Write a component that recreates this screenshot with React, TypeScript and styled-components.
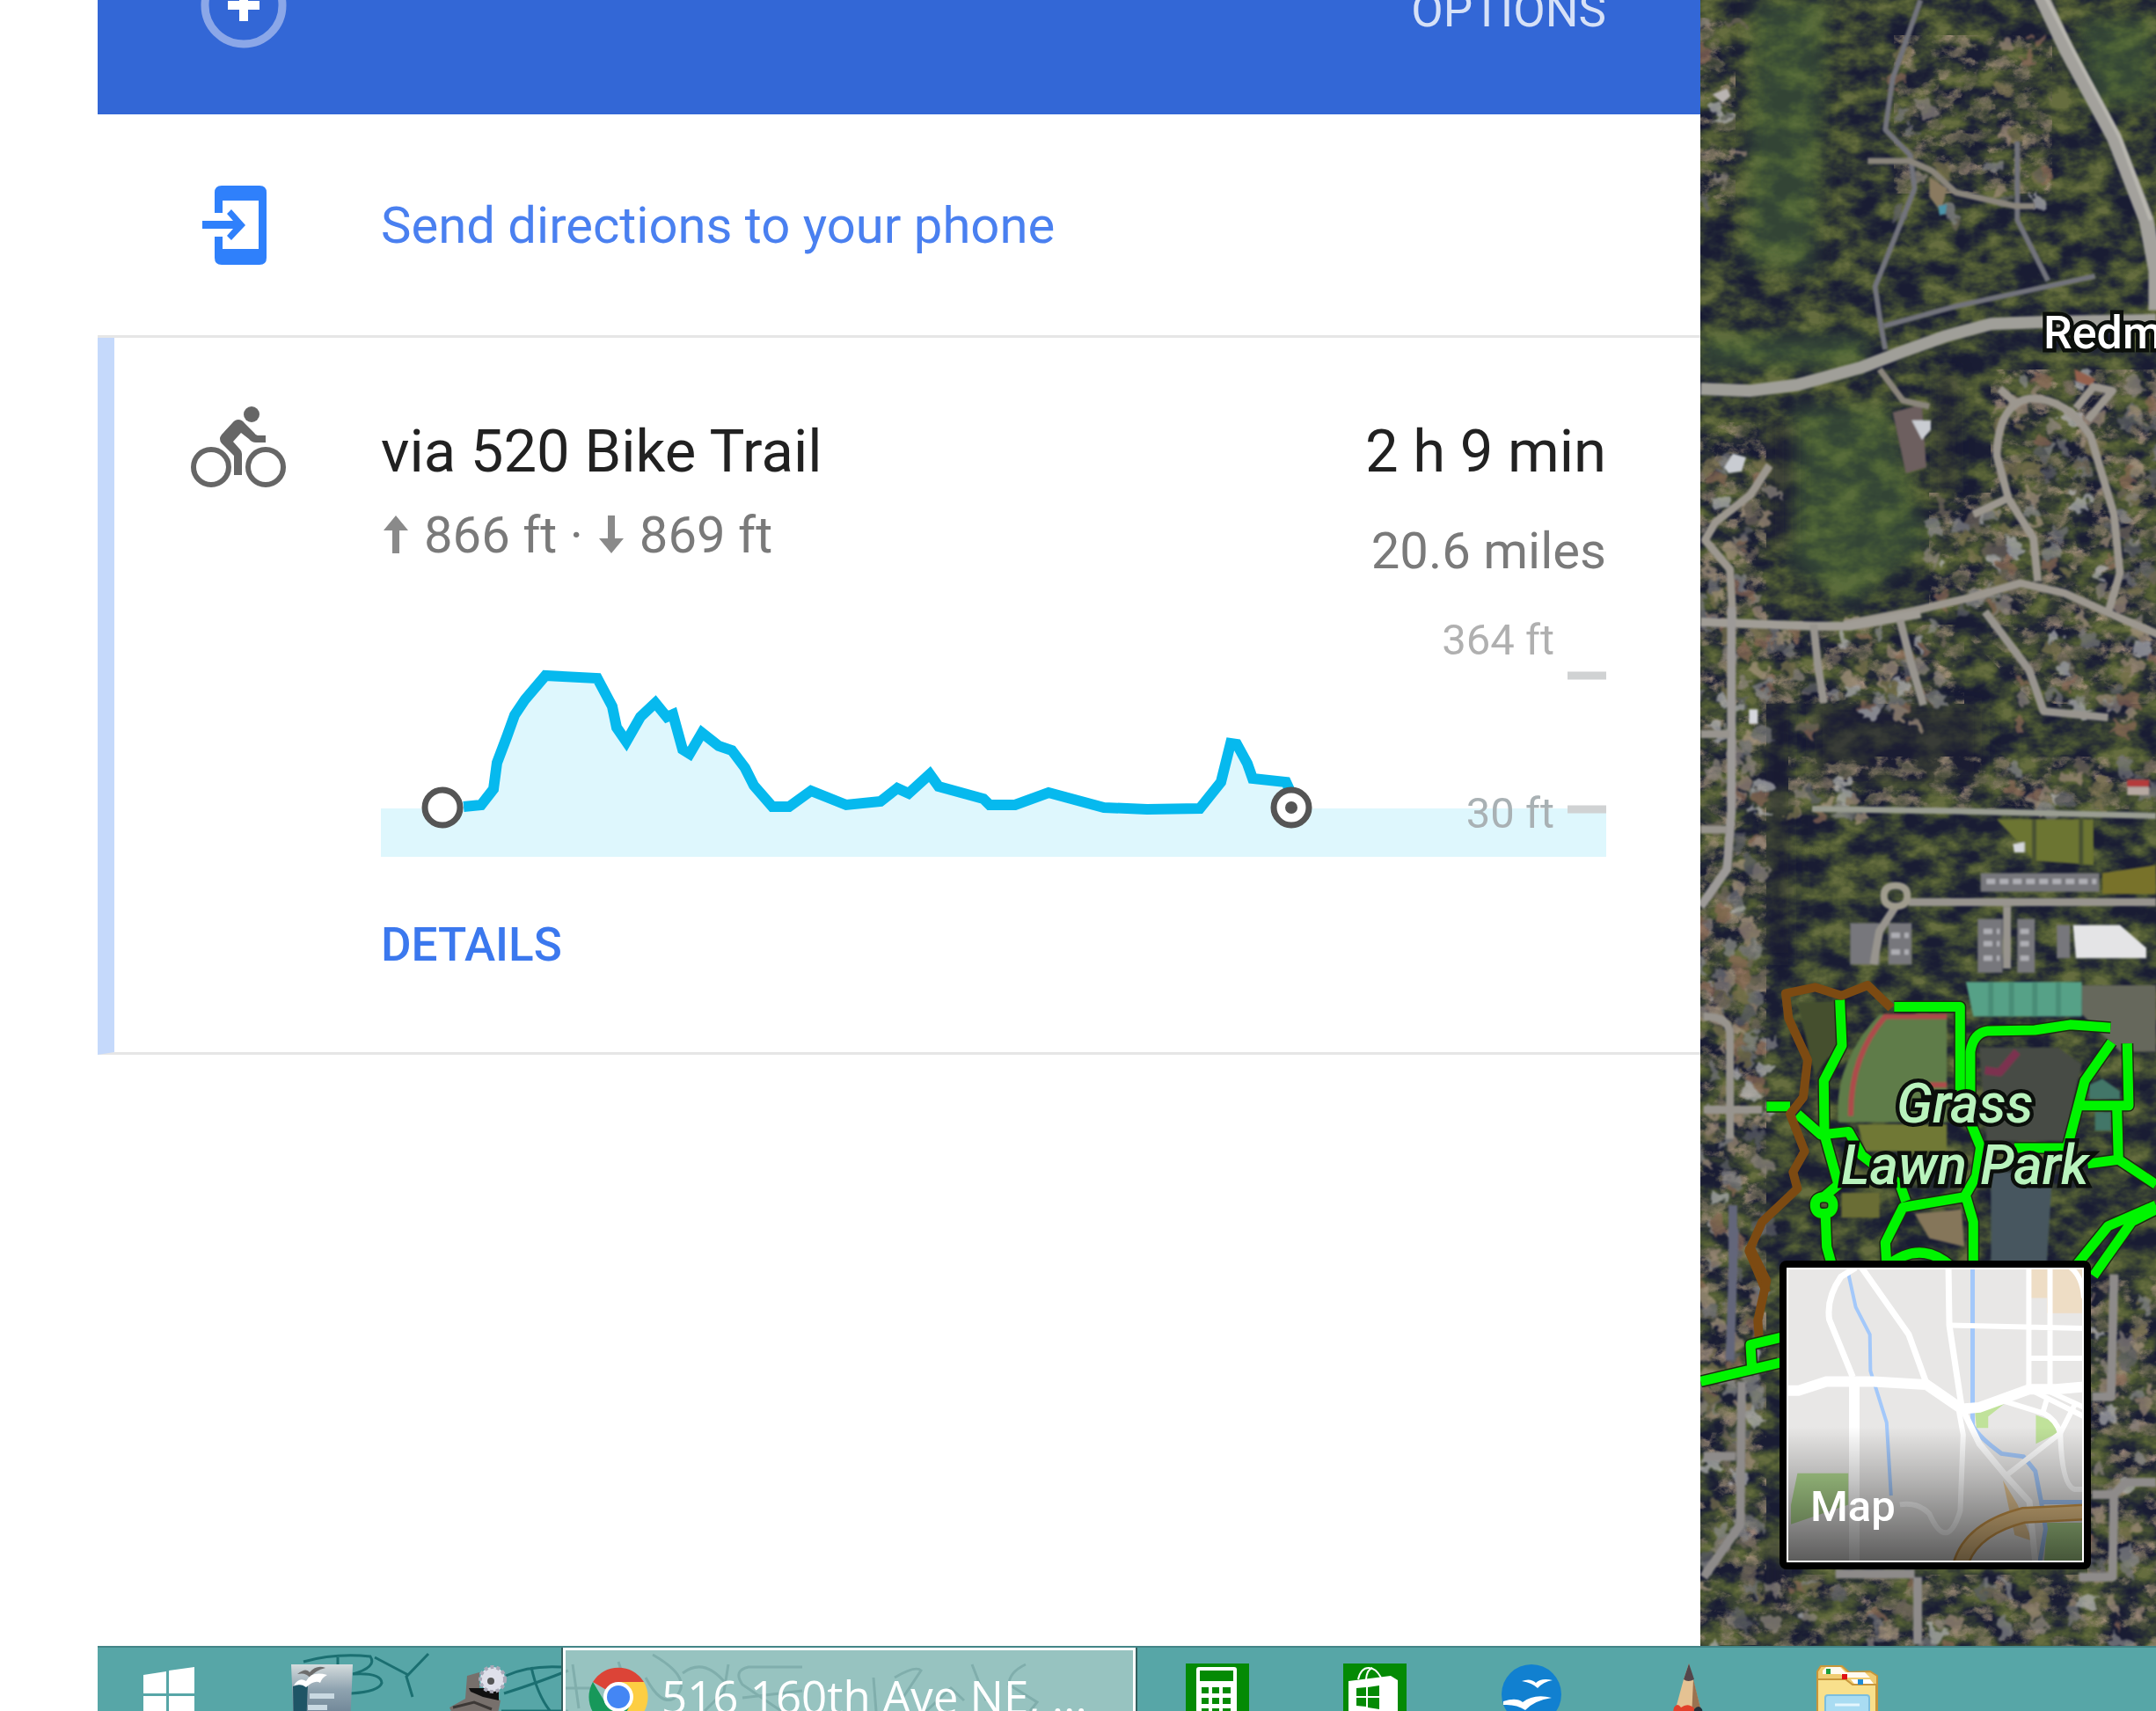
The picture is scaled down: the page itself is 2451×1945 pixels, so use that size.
import React from "react";
import styled, { createGlobalStyle } from "styled-components";

const GlobalStyle = createGlobalStyle`
  * { box-sizing: border-box; }
  body { margin: 0; background: #fff; font-family: Roboto, "Liberation Sans", sans-serif; }
  button { font-family: inherit; border: 0; padding: 0; background: none; cursor: pointer; }
`;

const Screen = styled.div`
  display: grid;
  grid-template-rows: minmax(0, 1fr) 74px;
  height: 100vh;
  padding-left: 111px;
  overflow: hidden;
`;

const Workspace = styled.main`
  display: grid;
  grid-template-columns: minmax(0, 1822fr) minmax(0, 518fr);
  min-height: 0;
`;

/* ---------- directions panel ---------- */

const Panel = styled.section`
  background: #fff;
  min-width: 0;
`;

const Header = styled.header`
  display: flex;
  align-items: flex-end;
  justify-content: space-between;
  height: 130px;
  padding: 0 107px 75px 117px;
  background: #3367d6;
  overflow: hidden;
`;

const AddButton = styled.button`
  display: flex;
  flex: none;
`;

const OptionsButton = styled.button`
  font-size: 53px;
  line-height: 86px;
  color: #d6e1f7;
`;

const SendRow = styled.a`
  display: grid;
  grid-template-columns: 203px 1fr;
  align-items: center;
  height: 254px;
  padding: 0 107px 0 119px;
  border-bottom: 3px solid #e6e6e6;
  font-size: 58px;
  line-height: 70px;
  color: #4a80f0;
  text-decoration: none;
`;

const Route = styled.article`
  display: grid;
  grid-template-columns: 216px minmax(0, 1fr);
  padding: 77px 107px 92px 87px;
  border-left: 19px solid #c5d9fb;
  border-bottom: 3px solid #e6e6e6;
`;

const RouteBody = styled.div`
  padding-top: 12px;
`;

const Summary = styled.div`
  display: flex;
  justify-content: space-between;
`;

const Column = styled.div<{ $end?: boolean; $gap: number }>`
  display: flex;
  flex-direction: column;
  gap: ${(p) => p.$gap}px;
  text-align: ${(p) => (p.$end ? "right" : "left")};
`;

const Title = styled.h1`
  margin: 0;
  font-size: 67px;
  line-height: 80px;
  font-weight: 400;
  color: #212121;
`;

const Detail = styled.div`
  display: flex;
  align-items: center;
  justify-content: flex-end;
  gap: 18px;
  font-size: 58px;
  line-height: 70px;
  color: #7a7a7a;
`;

const Climb = styled(Detail)`
  justify-content: flex-start;
  padding-left: 3px;
`;

const Chart = styled.svg`
  display: block;
  width: 100%;
  margin: 21px 0 70px;
  font-size: 49px;
`;

const DetailsButton = styled.button`
  display: block;
  font-size: 53px;
  line-height: 60px;
  font-weight: 500;
  color: #3b78ee;
`;

const profile: [number, number][] = [
  [527, 917], [547, 915], [561, 897], [565, 867], [576, 838], [585, 813], [597, 795], [620, 768],
  [679, 771], [696, 803], [701, 827], [712, 843], [728, 815], [745, 799], [758, 815], [765, 812],
  [776, 852], [784, 857], [798, 833], [817, 848], [832, 853], [847, 873], [857, 893], [878, 917],
  [897, 917], [922, 899], [962, 915], [1001, 911], [1020, 896], [1033, 902], [1057, 880],
  [1067, 894], [1118, 908], [1125, 915], [1154, 915], [1192, 901], [1255, 918], [1304, 920],
  [1364, 919], [1388, 889], [1399, 845], [1406, 846], [1418, 868], [1424, 885], [1462, 889], [1467, 900],
];

const line = profile.map(([x, y]) => `${x},${y}`).join(" ");

function ElevationChart() {
  return (
    <Chart viewBox="433 682 1393 292" role="img" aria-label="Elevation profile">
      <path d="M433 919H1826V974H433Z" fill="#def7fd" />
      <polygon points={`503,919 ${line} 1467,919`} fill="#def7fd" />
      <polyline points={line} fill="none" stroke="#06b9ee" strokeWidth="12" />
      <circle cx="503" cy="918" r="20" fill="#fff" stroke="#555" strokeWidth="7" />
      <circle cx="1468" cy="918" r="20" fill="#fff" stroke="#555" strokeWidth="7" />
      <circle cx="1468" cy="918" r="7" fill="#555" />
      <path d="M1782 768H1826M1782 920H1826" stroke="#d0d2d3" strokeWidth="9" />
      <text x="1767" y="744" textAnchor="end" fill="#b0b0b0">364 ft</text>
      <text x="1767" y="941" textAnchor="end" fill="#a9b1b4">30 ft</text>
    </Chart>
  );
}

function Arrow({ down }: { down?: boolean }) {
  return (
    <svg width="28" height="44" viewBox="0 0 28 44" aria-hidden="true">
      <path d={down ? "M10 0H18V26H28L14 43 0 26H10Z" : "M10 43H18V17H28L14 0 0 17H10Z"} fill="#8a8a8a" />
    </svg>
  );
}

function PhoneIcon() {
  return (
    <svg width="73" height="90" viewBox="0 0 73 90" aria-hidden="true" fill="#2f80fb">
      <path d="M14 8Q14 0 22 0H65Q73 0 73 8V82Q73 90 65 90H22Q14 90 14 82V58H23V72H64V17H23V31H14Z" />
      <path d="M0 40H35L28 32 33 27 49 45 33 62 28 57 35 49H0Z" />
    </svg>
  );
}

function BikeIcon() {
  return (
    <svg width="108" height="93" viewBox="0 0 108 93" aria-hidden="true" fill="#666">
      <g fill="none" stroke="#666" strokeWidth="6">
        <circle cx="23" cy="70" r="20" />
        <circle cx="85" cy="70" r="20" />
      </g>
      <circle cx="69" cy="10" r="9" />
      <path d="M54 16Q50 16 47 20L35 33Q31 38 35 43L49 57V79H58V55Q58 52 56 50L48 41 57 31 66 38Q69 42 74 42H85V34H76Q73 33 71 30L61 20Q58 16 54 16Z" />
    </svg>
  );
}

/* ---------- satellite map ---------- */

const MapArea = styled.section`
  position: relative;
  overflow: hidden;
  background: #2b3334;
`;

const Imagery = styled.svg`
  position: absolute;
  inset: 0;
  width: 100%;
  height: 100%;
`;

const PlaceLabel = styled.div<{ $x: number; $y: number; $park?: boolean }>`
  position: absolute;
  left: ${(p) => p.$x}px;
  top: ${(p) => p.$y}px;
  font-size: ${(p) => (p.$park ? 62 : 52)}px;
  line-height: 70px;
  font-weight: 500;
  font-style: ${(p) => (p.$park ? "italic" : "normal")};
  text-align: center;
  white-space: pre;
  color: ${(p) => (p.$park ? "#b9f3bd" : "#fff")};
  -webkit-text-stroke: 9px #0b0f0b;
  paint-order: stroke fill;
`;

const LayerButton = styled.button`
  && {
    position: absolute;
    left: 90px;
    bottom: 87px;
    width: 354px;
    height: 351px;
    border: 8px solid #000;
    border-radius: 8px;
    background: #e8e7e6;
    overflow: hidden;
  }
`;

const Thumb = styled.svg`
  position: absolute;
  inset: 0;
  width: 100%;
  height: 100%;
  fill: none;
  path { vector-effect: non-scaling-stroke; }
`;

const LayerShade = styled.span`
  position: absolute;
  inset: 0;
  display: flex;
  align-items: flex-end;
  padding: 0 0 31px 25px;
  border: 2px solid #fff;
  background: linear-gradient(rgba(0, 0, 0, 0) 54%, rgba(0, 0, 0, 0.22) 72%, rgba(0, 0, 0, 0.6));
  font-size: 49px;
  line-height: 60px;
  font-weight: 500;
  color: #fff;
`;

const Tile = styled.g`
  fill: none;
  stroke-linejoin: round;
  path { vector-effect: non-scaling-stroke; }
`;

const northTile = "translate(-3 0) scale(0.3333 0.4464)";
const parkTile = "translate(-3 700) scale(0.3333 0.4719)";
const southTile = "translate(-3 1400) scale(0.3333 0.3476)";

/* x, y, width, height, number of rooftops */
const neighbourhoods: number[][] = [
  [0, 500, 75, 700, 110], [75, 700, 200, 120, 50], [220, 30, 180, 220, 24], [330, 420, 188, 260, 75],
  [260, 560, 90, 130, 24], [350, 690, 168, 130, 28], [100, 880, 90, 40, 14], [0, 1100, 75, 770, 120],
  [75, 1790, 443, 80, 36], [440, 1450, 78, 340, 34], [350, 860, 168, 60, 20], [0, 20, 40, 220, 9],
];
const roofColours = ["#8f8680", "#a08b7c", "#77777c", "#8b8b8d", "#6f665c", "#a89580", "#8d6a58", "#b5b5b8", "#7b7350", "#5f6168"];

function makeRoofs() {
  let seed = 7;
  const next = () => {
    seed = (seed * 16807) % 2147483647;
    return seed / 2147483647;
  };
  return neighbourhoods.flatMap(([x, y, w, h, n]) =>
    Array.from({ length: n }, () => ({
      x: Math.round(x + next() * w),
      y: Math.round(y + next() * h),
      w: Math.round(9 + next() * 14),
      h: Math.round(8 + next() * 10),
      turn: Math.round(next() * 90),
      fill: roofColours[Math.floor(next() * roofColours.length)],
    }))
  );
}
const roofs = makeRoofs();

function Satellite() {
  return (
    <Imagery viewBox="0 0 518 1871" preserveAspectRatio="xMinYMin slice" aria-hidden="true">
      <defs>
        <filter id="forest" x="0" y="0" width="100%" height="100%" colorInterpolationFilters="sRGB">
          <feTurbulence type="fractalNoise" baseFrequency="0.028 0.04" numOctaves="4" seed="11" />
          <feColorMatrix values="2 0 0 0 -0.55  2 0 0 0 -0.55  2 0 0 0 -0.55  0 0 0 0 1" />
          <feComponentTransfer>
            <feFuncR type="table" tableValues="0.1 0.13 0.19 0.26 0.33 0.4" />
            <feFuncG type="table" tableValues="0.11 0.15 0.22 0.3 0.37 0.43" />
            <feFuncB type="table" tableValues="0.2 0.21 0.2 0.2 0.21 0.25" />
          </feComponentTransfer>
        </filter>
        <filter id="clearing" x="0" y="0" width="100%" height="100%" colorInterpolationFilters="sRGB">
          <feTurbulence type="fractalNoise" baseFrequency="0.045 0.06" numOctaves="5" seed="4" result="noise" />
          <feColorMatrix in="noise" values="0.7 0 0 0 0.16  0.5 0 0 0 0.22  0.5 0 0 0 0.14  0 5 0 0 -2.4" />
          <feComposite in2="SourceGraphic" operator="in" />
        </filter>
        <filter id="roofs" x="0" y="0" width="100%" height="100%">
          <feTurbulence type="fractalNoise" baseFrequency="0.08" numOctaves="2" seed="9" result="warp" />
          <feDisplacementMap in="SourceGraphic" in2="warp" scale="22" xChannelSelector="R" yChannelSelector="G" />
          <feGaussianBlur stdDeviation="1" />
        </filter>
        <filter id="soft"><feGaussianBlur stdDeviation="1" /></filter>
        <filter id="haze"><feGaussianBlur stdDeviation="10" /></filter>
      </defs>
      <rect width="518" height="1871" filter="url(#forest)" />
      <g filter="url(#haze)" fill="#4e6c38" opacity="0.5">
        <path d="M60 0H145L130 310 50 300ZM105 460H215L260 620 170 690 100 640ZM430 20H518V120H440ZM0 380H190V420H0Z" />
      </g>
      <g filter="url(#haze)" fill="#1a1e33" opacity="0.6">
        <path d="M75 480H105V620H75ZM270 420H290V560H270ZM75 780H100V1090H75ZM130 800H320V890H130ZM75 1750H95V1870H75Z" />
      </g>
      <g opacity="0.75" filter="url(#clearing)">
        <path d="M0 480H75V1870H0ZM330 420H518V720H330ZM75 710H300V800H75ZM440 1450H518V1871H75V1790H440ZM100 860H518V920H100ZM220 40H400V220H220ZM0 20H40V240H0ZM260 560H350V690H260ZM300 720H518V800H380Z" fill="#fff" />
      </g>
      <g filter="url(#roofs)" opacity="0.7">
        {roofs.map((r, i) => (
          <rect key={i} x={r.x} y={r.y} width={r.w} height={r.h} fill={r.fill} transform={`rotate(${r.turn} ${r.x} ${r.y})`} />
        ))}
      </g>

      <g filter="url(#soft)">
        <Tile transform={northTile}>
          <path d="M665 1050 L765 1030 L780 1190 L710 1205Z" fill="#6d5f5f" />
          <path d="M730 1070H795V1095L765 1120Z" fill="#c9ccd2" />
          <path d="M90 1190L120 1155 165 1165 150 1200 105 1205Z" fill="#c9ccd2" />
          <path d="M50 240L100 225 112 245 85 262Z" fill="#b9b4b2" />
          <path d="M790 450L850 480 830 540 790 500Z" fill="#8a7a60" />
          <path d="M820 525L850 520 845 545 825 548Z" fill="#4b93a8" />
          <path d="M1285 940L1355 965 1345 985 1290 970Z" fill="#94604d" />
          <g stroke="#72737c" strokeWidth="6">
            <path d="M760 0L665 200 640 330 725 395 740 480 605 730 625 830 640 890" />
            <path d="M1090 360V560L1195 715M635 830L880 780 1355 703" />
          </g>
          <path d="M580 410L725 410 800 435 880 490 1085 525 1150 525M620 940L700 1020 790 1035" stroke="#8a857c" strokeWidth="7" />
          <path d="M1165 -20L1260 130 1420 350 1530 560 1563 690V790" stroke="#a3a19c" strokeWidth="17" />
          <path d="M1185 -10L1290 140 1440 350 1545 560" stroke="#b9b7b0" strokeWidth="4" />
          <path d="M10 990L180 995 340 980 560 935 700 895 850 855 1000 825 1180 820 1563 815" stroke="#a09f99" strokeWidth="14" />
          <g stroke="#9c978f" strokeWidth="9">
            <path d="M1160 1480L1145 1370 1060 1270 1020 1160Q1025 1030 1130 1015 1250 1010 1340 1110L1420 1310 1440 1460 1400 1560M1090 1030L1030 990" />
            <path d="M1290 1040L1350 985 1415 995 1330 1070M940 1310L1055 1270" />
            <path d="M500 1590L740 1555 940 1520 1100 1485 1250 1510 1420 1567 1600 1625" />
            <path d="M245 1185L180 1260 60 1330 25 1375 110 1450 120 1580" />
          </g>
        </Tile>
        <Tile transform={parkTile}>
          <path d="M1020 490H1350V600L1150 590Z" fill="#6c7430" />
          <path d="M1140 490H1155V600H1140ZM1300 490H1315V600H1300Z" fill="#4a5230" />
          <path d="M1380 620L1563 600V670H1380Z" fill="#78722c" />
          <path d="M1075 550L1115 545V570H1080ZM175 225H205V260H175Z" fill="#d5d7dc" />
          <path d="M965 620H1370V665H965ZM955 730H1040V860H955ZM1090 730H1150V860H1090ZM520 740H620V840H520ZM650 740H730V840H650ZM1225 745H1270V825H1225Z" fill="#77777b" />
          <path d="M985 640H1360M975 760H1030M975 790H1030M975 825H1030M1100 760H1145M1100 790H1145M1100 825H1145M660 770H720M660 810H720" stroke="#aeaeb4" strokeWidth="6" strokeDasharray="10 5" />
          <path d="M1280 745H1440L1530 800V825H1290Z" fill="#e4e4e6" />
          <path d="M1465 395H1540V412H1465Z" fill="#b53a3a" />
          <path d="M1465 412H1540V432H1465Z" fill="#b7a9a2" />
          <path d="M10 15L395 25 520 25 760 -5" stroke="#a19d96" strokeWidth="10" />
          <path d="M115 -20V470L100 610 10 700" stroke="#9d9a98" strokeWidth="10" />
          <g stroke="#98948e" strokeWidth="9">
            <path d="M395 20L410 120 430 210M690 10L730 120 770 215M980 -10L1130 130 1180 230 1400 245" />
            <path d="M10 285H110M10 515H100M20 965Q110 965 110 1010V1260M20 1190H220" />
            <path d="M720 690H1563M675 700L620 760 600 840M1055 700V850" />
          </g>
          <path d="M635 675Q635 650 675 650 715 650 715 675 715 700 675 700 635 700 635 675Z" stroke="#a09c8e" strokeWidth="8" />
          <path d="M390 465L850 470 1563 482" stroke="#9a9d92" strokeWidth="7" />
          <path d="M120 1420V1600" stroke="#63667a" strokeWidth="10" />
          <path d="M1310 890H1563V1050H1440L1310 960Z" fill="#66675c" />
          <path d="M340 930H470L480 1030 400 1110Z" fill="#44502f" />
          <path d="M915 882H1310V965H940Z" fill="#57a187" />
          <path d="M1000 882V965M1070 882V965M1150 882V965M1230 882V965" stroke="#4a8d77" strokeWidth="6" />
          <path d="M620 960H850V1220H480Q460 1080 620 960Z" fill="#5f7c48" />
          <path d="M850 965H640Q520 1060 522 1205M790 1130H850" stroke="#ad4c4b" strokeWidth="6" />
          <path d="M545 1225H850V1290H570Z" fill="#6f7834" />
          <path d="M960 1040H1230L1310 1080 1250 1265H985Z" fill="#474b44" />
          <path d="M980 1095L1030 1100 1090 1050" stroke="#7c3350" strokeWidth="9" />
          <path d="M1000 1340H1210L1190 1567H1000Z" fill="#47575f" />
          <path d="M1335 1130L1380 1115 1440 1145V1165H1335ZM1355 1195H1410V1240H1355Z" fill="#427668" />
          <path d="M740 1440L900 1430 910 1520 790 1500Z" fill="#85765a" />
          <path d="M490 1390H620V1450H490Z" fill="#6a6d35" />
        </Tile>
        <Tile transform={southTile} stroke="#8e8b8a" strokeWidth="10">
          <path d="M125 -10L110 420" stroke="#63667a" />
          <path d="M150 490L145 960 20 1130M20 735H130M470 1120H740M750 1130V1350" />
          <path d="M1420 140L1410 540H1345M1563 820H1460L1420 860H1345M1420 860L1415 1130H1300" />
        </Tile>
      </g>

      <Tile transform={parkTile}>
        {[{ c: "#1d2b12", w: 14 }, { c: "#00f500", w: 11 }].map((s) => (
          <g key={s.c} stroke={s.c} strokeWidth={s.w}>
            <path d="M485 925L492 1035 430 1120 432 1250 480 1370 430 1400M435 1430L440 1520 460 1570" />
            <path d="M670 942H895V1160M930 1150V1050Q940 1005 990 1000L1150 998 1270 985 1408 992" />
            <path d="M235 1182H315M340 1200L420 1250 515 1243 560 1300 690 1370 710 1410" />
            <path d="M930 1220L965 1280 950 1350 910 1400 700 1425 640 1510 645 1567Q760 1500 870 1570M915 1400L940 1460V1570" />
            <path d="M1412 1027L1320 1120 1260 1282H1080M1465 1030L1470 1180H1310M1430 1180L1435 1310 1330 1320M1435 1310L1563 1370" />
            <path d="M1563 1420L1400 1470 1285 1570M1563 1430L1480 1460 1350 1590" />
            <path d="M400 1420Q400 1400 430 1400 462 1400 462 1420 462 1440 430 1440 400 1440 400 1420Z" />
          </g>
        ))}
        <path d="M660 945L580 890 490 915 400 895 300 910 310 970 375 1070 360 1160 315 1200 365 1290 325 1340 340 1380 220 1460 175 1530 235 1630" stroke="#7c4a12" strokeWidth="10" />
      </Tile>
      <Tile transform={southTile}>
        <path d="M175 45L235 160 205 290 210 360" stroke="#7c4a12" strokeWidth="10" />
        <path d="M10 490L275 430 M290 345L180 370 185 450" stroke="#1d2b12" strokeWidth="14" />
        <path d="M10 490L300 425 M290 345L180 370 185 450" stroke="#00f500" strokeWidth="11" />
      </Tile>
    </Imagery>
  );
}

function MapThumb() {
  return (
    <Thumb viewBox="305 120 1010 970" preserveAspectRatio="none" aria-hidden="true">
      <path d="M1135 125H1315V270H1190V220H1135Z" fill="#eeddc5" />
      <path d="M342 797H515V900L320 965V900Z" fill="#b0d890" />
      <path d="M945 590L1045 568 990 610V648H950ZM1152 605L1210 625 1225 665 1152 700Z" fill="#c0e29a" />
      <path d="M1190 960H1315V1090H1180Z" fill="#b0d890" />
      <path d="M1040 820L1090 900 1140 1020 1080 1000Z" fill="#e6c795" />
      <path d="M515 140L540 250 588 340 590 460 645 630 660 870" stroke="#a3c8fa" strokeWidth="4" />
      <path d="M937 120V640Q960 680 1035 732L1110 742 1150 790 1170 890 1185 980 1165 1090M1170 892H1315" stroke="#a3c8fa" strokeWidth="5" />
      <g stroke="#fff">
        <path d="M305 525H345L440 495H600L780 505 900 585 960 580 1130 520H1220L1315 512M535 490V1090" strokeWidth="12" />
        <path d="M530 480L450 290Q440 220 490 150L540 120M560 120L720 340 780 500M855 120L858 310 900 580 960 700 1050 805 1130 890 1150 1090" strokeWidth="7" />
        <path d="M1128 120V515M1200 120V520M860 310L1315 320M1130 418H1315M1270 120Q1310 150 1315 220M890 590L905 670 895 920Q850 1060 790 930 750 890 690 900" strokeWidth="6" />
        <path d="M1045 560L1180 600Q1220 620 1235 665L1050 805M1235 665L1290 560M1140 525L1315 610M1180 520L1315 580M1190 550L1175 600M1235 665Q1240 840 1285 850H1315" strokeWidth="6" />
      </g>
      <path d="M895 1100Q930 980 1110 935L1315 925" stroke="#d49d4c" strokeWidth="19" />
      <path d="M895 1100Q930 980 1110 935L1315 925" stroke="#efc98b" strokeWidth="14" />
    </Thumb>
  );
}

/* ---------- taskbar ---------- */

const Taskbar = styled.nav`
  position: relative;
  display: flex;
  min-width: 0;
  background: #57a6a7;
  border-top: 2px solid #438587;
  overflow: hidden;
`;

const Scribble = styled.svg`
  position: absolute;
  left: 0;
  top: 0;
  fill: none;
  stroke: #1b6f71;
  stroke-width: 3;
`;

const TaskButton = styled.button<{ $width?: number }>`
  && {
    position: relative;
    display: flex;
    flex: none;
    justify-content: center;
    align-items: flex-start;
    width: ${(p) => p.$width ?? 179}px;
    padding-top: 18px;
  }
`;

const WindowButton = styled.button`
  && {
    position: relative;
    display: flex;
    flex: none;
    align-items: flex-start;
    gap: 13px;
    width: 651px;
    margin: 0 3px 0 6px;
    padding: 17px 20px 0 24px;
    border: 3px solid #fff;
    border-bottom: 0;
    outline: 2px solid #33605f;
    background: rgba(190, 213, 208, 0.62);
    font-family: "Open Sans", "Noto Sans", sans-serif;
    font-size: 51px;
    line-height: 70px;
    color: #fff;
    white-space: nowrap;
  }
`;

const TaskIcon = styled.svg`
  flex: none;
  display: block;
`;

function Icon({ children }: { children: React.ReactNode }) {
  return <TaskIcon width="72" height="72" viewBox="0 0 72 72" aria-hidden="true">{children}</TaskIcon>;
}

function DesktopTaskbar() {
  return (
    <Taskbar aria-label="Taskbar">
      <Scribble width="1150" height="74" viewBox="0 0 1150 74" aria-hidden="true">
        <path d="M234 16Q270 6 310 10 318 22 290 30 322 28 323 40 320 50 288 52M273 11V50M315 11L353 31M376 7L351 33 358 56" />
        <path d="M464 32Q490 20 527 22M462 52Q500 40 535 26M459 72H535M493 22Q500 55 516 74" />
        <path d="M540 19L547 69M529 46H560M592 16L600 40M631 8Q680 36 655 58 640 66 623 34M665 29Q690 10 715 42M717 19L712 50 690 72M801 22H740Q722 26 733 42L780 74M733 57L801 49M882 34L885 72M906 34Q930 20 936 26L916 56M940 74L970 46 985 60M994 19L1010 60M1055 19Q1036 28 1036 42L1068 62 1060 72" />
      </Scribble>
      <TaskButton $width={165} aria-label="Start">
        <Icon>
          <path d="M5 13L31 9V34H5ZM34 8L63 4V34H34ZM5 37H31V62L5 58ZM34 37H63V68L34 63Z" fill="#fff" />
        </Icon>
      </TaskButton>
      <TaskButton aria-label="Writer">
        <Icon>
          <defs>
            <linearGradient id="page" x2="0" y2="1">
              <stop offset="0" stopColor="#d5dcdd" />
              <stop offset="0.4" stopColor="#8fa3b0" />
              <stop offset="1" stopColor="#5f7689" />
            </linearGradient>
          </defs>
          <path d="M1 1H71L68 72H4Z" fill="url(#page)" />
          <path d="M3 26L20 22 18 72H4Z" fill="#1e5566" />
          <path d="M8 12Q18 4 22 10 30 1 40 5 28 8 22 16 18 10 8 12Z" fill="#6d6d6d" />
          <path d="M4 25Q10 15 18 20 24 8 42 13 36 16 34 22 28 18 18 27 12 22 4 25Z" fill="#fff" />
          <path d="M22 37H50M20 50H42" stroke="#c9d9e2" strokeWidth="6" />
        </Icon>
      </TaskButton>
      <TaskButton aria-label="Device tool">
        <Icon>
          <path d="M22 14L36 10V28L60 42 54 72H12L2 50 20 40Z" fill="#77706c" />
          <path d="M24 28H58V42L40 38 26 32Z" fill="#111" />
          <circle cx="51" cy="18" r="14" fill="#dfe0ea" stroke="#a9a9b8" strokeWidth="4" strokeDasharray="4 3" />
          <circle cx="49" cy="20" r="4" fill="#555" />
          <path d="M6 50L30 44 50 52" stroke="#3c3836" strokeWidth="3" fill="none" />
        </Icon>
      </TaskButton>
      <WindowButton>
        <TaskIcon width="72" height="72" viewBox="0 0 72 72" aria-hidden="true">
          <path d="M36 36L7 19A34 34 0 0 1 65 19Z" fill="#dc4437" />
          <path d="M36 36V19H65A34 34 0 0 1 36 70Z" fill="#fdce43" />
          <path d="M36 36L22 44 7 19A34 34 0 0 0 36 70L48 48Z" fill="#17985a" />
          <circle cx="36" cy="36" r="17" fill="#fff" />
          <circle cx="36" cy="36" r="13" fill="#4486f4" />
        </TaskIcon>
        <span>516 160th Ave NE, ...</span>
      </WindowButton>
      <TaskButton aria-label="Calculator">
        <Icon>
          <path d="M0 0H72V72H0Z" fill="#048a04" />
          <rect x="12" y="4" width="46" height="80" rx="3" fill="#fff" />
          <path d="M16 8H54V20H16ZM18 27H26V34H18ZM30 27H38V34H30ZM42 27H51V34H42ZM18 39H26V46H18ZM30 39H38V46H30ZM42 39H51V46H42ZM18 51H26V58H18ZM30 51H38V58H30ZM42 51H51V58H42Z" fill="#048a04" />
        </Icon>
      </TaskButton>
      <TaskButton aria-label="Store">
        <Icon>
          <path d="M0 0H72V72H0Z" fill="#048a04" />
          <path d="M6 20L54 14 62 19V72H6Z" fill="#fff" />
          <path d="M17 18Q20 5 29 5 37 5 43 16M26 18Q27 7 33 5" fill="none" stroke="#fff" strokeWidth="2" />
          <path d="M15 28L26 27V37H15ZM28 27L41 25V37H28ZM15 39H26V49L15 48ZM28 39H41V52L28 50Z" fill="#048a04" />
        </Icon>
      </TaskButton>
      <TaskButton aria-label="OpenOffice">
        <Icon>
          <circle cx="35" cy="35" r="34" fill="#1180d0" />
          <path d="M24 20Q34 16 40 22 46 16 59 19 48 21 42 28 36 22 24 20Z" fill="#fff" />
          <path d="M3 43Q18 38 25 44 38 34 58 39 38 42 28 53 18 46 3 47Z" fill="#fff" />
        </Icon>
      </TaskButton>
      <TaskButton aria-label="Pencil">
        <Icon>
          <path d="M35 0L51 62H17L29 18Z" fill="#e5c293" />
          <path d="M40 18L51 62H38Z" fill="#9a7250" />
          <path d="M35 0L41 18Q34 22 29 18Z" fill="#54464b" />
          <path d="M18 50Q22 44 26 50 34 44 41 51L40 72H14Z" fill="#e2402a" />
          <path d="M41 52Q46 46 50 52L54 72H40Z" fill="#24303a" />
        </Icon>
      </TaskButton>
      <TaskButton aria-label="File Explorer">
        <Icon>
          <path d="M2 9L6 3H30L38 10 62 9 70 14V72H2Z" fill="#f0cc72" stroke="#c8963a" strokeWidth="2" />
          <path d="M8 8L12 4H28L34 10H56L62 16H36L28 12H8Z" fill="#fffaf0" />
          <path d="M2 18H34L42 24H69V72H2Z" fill="#f9e08c" stroke="#c8963a" strokeWidth="2" />
          <path d="M40 18H62L66 23H44Z" fill="#fff" />
          <path d="M12 6H17V12H12Z" fill="#1c9d3c" />
          <path d="M30 12H36V18H30Z" fill="#e01212" />
          <path d="M48 18H54V24H48Z" fill="#1f8bd6" />
          <rect x="11" y="36" width="50" height="34" rx="3" fill="#a9dcf2" stroke="#7cbede" strokeWidth="2" />
          <path d="M22 47H50" stroke="#e5f6fd" strokeWidth="3" />
        </Icon>
      </TaskButton>
    </Taskbar>
  );
}

export default function App() {
  return (
    <>
      <GlobalStyle />
      <Screen>
        <Workspace>
          <Panel>
            <Header>
              <AddButton aria-label="Add destination">
                <svg width="98" height="98" viewBox="0 0 98 98" aria-hidden="true" fill="none">
                  <circle cx="49" cy="49" r="44" stroke="#8ba7e8" strokeWidth="9" />
                  <path d="M31 49H67M49 31V67" stroke="#fff" strokeWidth="10" />
                </svg>
              </AddButton>
              <OptionsButton>OPTIONS</OptionsButton>
            </Header>
            <SendRow href="#send">
              <PhoneIcon />
              <span>Send directions to your phone</span>
            </SendRow>
            <Route>
              <BikeIcon />
              <RouteBody>
                <Summary>
                  <Column $gap={20}>
                    <Title>via 520 Bike Trail</Title>
                    <Climb>
                      <Arrow />
                      <span>866 ft ·</span>
                      <Arrow down />
                      <span>869 ft</span>
                    </Climb>
                  </Column>
                  <Column $end $gap={38}>
                    <Title as="div">2 h 9 min</Title>
                    <Detail>20.6 miles</Detail>
                  </Column>
                </Summary>
                <ElevationChart />
                <DetailsButton>DETAILS</DetailsButton>
              </RouteBody>
            </Route>
          </Panel>
          <MapArea aria-label="Satellite map">
            <Satellite />
            <PlaceLabel $x={390} $y={344}>Redm</PlaceLabel>
            <PlaceLabel $x={160} $y={1220} $park>{"Grass\nLawn Park"}</PlaceLabel>
            <LayerButton>
              <MapThumb />
              <LayerShade>Map</LayerShade>
            </LayerButton>
          </MapArea>
        </Workspace>
        <DesktopTaskbar />
      </Screen>
    </>
  );
}
